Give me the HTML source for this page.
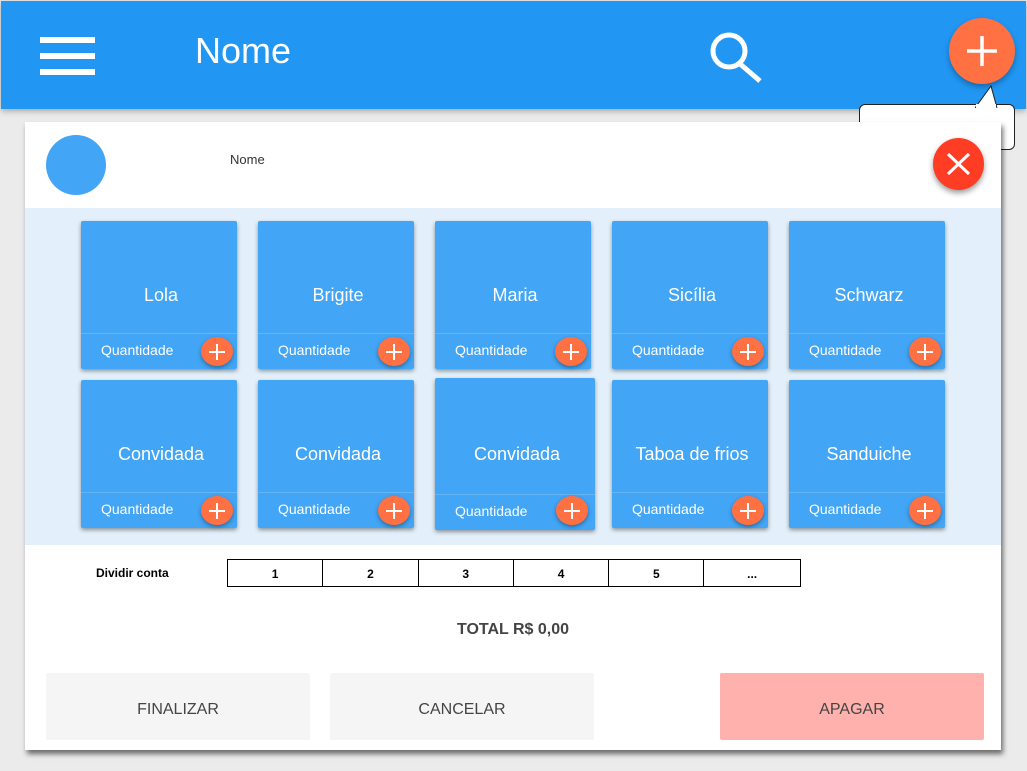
<!DOCTYPE html><html><head><style>
*{margin:0;padding:0;box-sizing:border-box}
body{width:1027px;height:771px;background:#ebebeb;font-family:"Liberation Sans",sans-serif;position:relative;overflow:hidden}
.abs{position:absolute}
.hdr{left:1px;top:1px;width:1025px;height:108px;background:#2196f3;box-shadow:0 2px 6px rgba(0,0,0,.3)}
.bar{left:40px;width:55px;height:6px;background:#fff}
.panel{left:25px;top:122px;width:976px;height:628px;background:#fff;box-shadow:2px 4px 5px rgba(0,0,0,.55)}
.blue{left:0;top:86px;width:976px;height:337px;background:#e3f0fb}
.card{position:absolute;width:156px;height:148px;background:#42a5f5;border-radius:2px;box-shadow:0 2px 4px rgba(0,0,0,.4);color:#fff}
.card .n{position:absolute;left:0;right:0;top:64px;text-align:center;font-size:18px;padding-left:4px}
.card .l{position:absolute;left:0;right:0;top:112px;border-top:1px solid #64b5f6}
.card .q{position:absolute;left:20px;top:121px;font-size:14px}
.card .p{position:absolute;left:120px;top:116px;width:32px;height:29px;border-radius:50%;background:#ff7043;box-shadow:0 2px 4px rgba(0,0,0,.35)}
.p:before,.p:after{content:"";position:absolute;background:#fff;left:50%;top:50%}
.p:before{width:16px;height:2px;margin:-1px 0 0 -8px}
.p:after{width:2px;height:16px;margin:-8px 0 0 -1px}
.tbl{left:202px;top:437px;display:flex;border:1px solid #000}
.tbl div{width:95.3px;height:26px;border-right:1px solid #000;text-align:center;font-size:12px;font-weight:bold;line-height:28px}
.tbl div:last-child{border-right:0}
.btn{top:551px;width:264px;height:67px;background:#f5f5f5;border-radius:2px;text-align:center;line-height:74px;font-size:16px;color:#444}
</style></head><body>
<div class="abs hdr">
<div class="abs bar" style="top:36px;left:39px"></div><div class="abs bar" style="top:52px;left:39px"></div><div class="abs bar" style="top:68px;left:39px"></div>
<div class="abs" style="left:194px;top:29px;color:#fff;font-size:36px">Nome</div>
<svg class="abs" style="left:704px;top:26px" width="60" height="58"><circle cx="24" cy="24" r="16" fill="none" stroke="#fff" stroke-width="5"/><line x1="34" y1="36" x2="55" y2="54" stroke="#fff" stroke-width="5"/></svg>
</div>
<div class="abs" style="left:859px;top:104px;width:156px;height:46px;background:#fff;border:1px solid #222;border-radius:6px"></div>
<svg class="abs" style="left:975px;top:84px" width="30" height="24"><path d="M0 24 L16 2 L22 24" fill="#fff" stroke="#222"/><rect x="1" y="20" width="20" height="6" fill="#fff"/></svg>
<div class="abs" style="left:949px;top:18px;width:66px;height:66px;border-radius:50%;background:#ff7043;box-shadow:0 3px 6px rgba(0,0,0,.3)"><svg width="66" height="66"><path d="M33 18 V48 M18 33 H48" stroke="#fff" stroke-width="3.5"/></svg></div>
<div class="abs panel">
<div class="abs" style="left:21px;top:13px;width:60px;height:60px;border-radius:50%;background:#42a5f5"></div>
<div class="abs" style="left:205px;top:30px;font-size:13px;color:#333">Nome</div>
<div class="abs" style="left:908px;top:16px;width:51px;height:52px;border-radius:50%;background:#ff3d24;box-shadow:0 3px 6px rgba(0,0,0,.4)"><svg width="51" height="52"><path d="M15 16 L36 36 M36 16 L15 36" stroke="#fff" stroke-width="3"/></svg></div>
<div class="abs blue">
<div class="card" style="left:56px;top:13px"><div class="n">Lola</div><div class="l"></div><div class="q">Quantidade</div><div class="p"></div></div>
<div class="card" style="left:233px;top:13px"><div class="n">Brigite</div><div class="l"></div><div class="q">Quantidade</div><div class="p"></div></div>
<div class="card" style="left:410px;top:13px"><div class="n">Maria</div><div class="l"></div><div class="q">Quantidade</div><div class="p"></div></div>
<div class="card" style="left:587px;top:13px"><div class="n">Sicília</div><div class="l"></div><div class="q">Quantidade</div><div class="p"></div></div>
<div class="card" style="left:764px;top:13px"><div class="n">Schwarz</div><div class="l"></div><div class="q">Quantidade</div><div class="p"></div></div>
<div class="card" style="left:56px;top:172px"><div class="n">Convidada</div><div class="l"></div><div class="q">Quantidade</div><div class="p"></div></div>
<div class="card" style="left:233px;top:172px"><div class="n">Convidada</div><div class="l"></div><div class="q">Quantidade</div><div class="p"></div></div>
<div class="card" style="left:410px;top:170px;width:160px;height:152px"><div class="n" style="top:66px">Convidada</div><div class="l" style="top:116px"></div><div class="q" style="top:125px">Quantidade</div><div class="p" style="left:121px;top:118px"></div></div>
<div class="card" style="left:587px;top:172px"><div class="n">Taboa de frios</div><div class="l"></div><div class="q">Quantidade</div><div class="p"></div></div>
<div class="card" style="left:764px;top:172px"><div class="n">Sanduiche</div><div class="l"></div><div class="q">Quantidade</div><div class="p"></div></div>
</div>
<div class="abs" style="left:71px;top:444px;font-size:12px;font-weight:bold">Dividir conta</div>
<div class="abs tbl"><div>1</div><div>2</div><div>3</div><div>4</div><div>5</div><div>...</div></div>
<div class="abs" style="left:0;width:976px;top:499px;text-align:center;font-size:16px;font-weight:bold;color:#444">TOTAL R$ 0,00</div>
<div class="abs btn" style="left:21px">FINALIZAR</div>
<div class="abs btn" style="left:305px">CANCELAR</div>
<div class="abs btn" style="left:695px;background:#ffb2ad">APAGAR</div>
</div>
</body></html>
